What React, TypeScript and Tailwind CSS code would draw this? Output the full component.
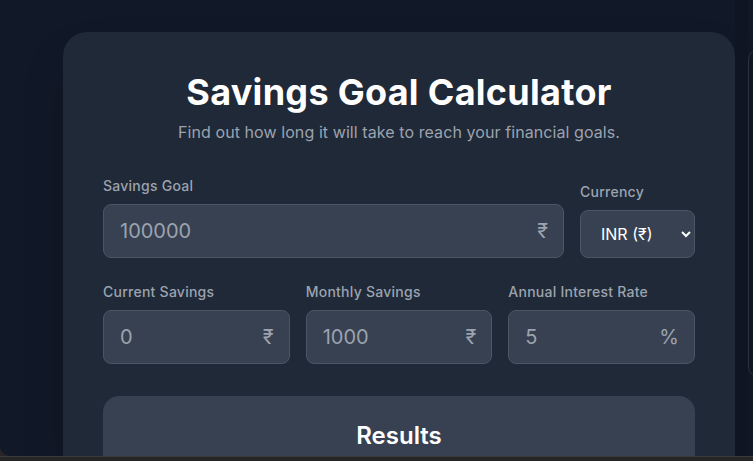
import { useState } from 'react';

// Savings goal calculator — form header section only.

type Field = {
  key: string;
  label: string;
  placeholder: string;
  suffix: string;
};

const rowFields: Field[] = [
  { key: 'current', label: 'Current Savings', placeholder: '0', suffix: '₹' },
  { key: 'monthly', label: 'Monthly Savings', placeholder: '1000', suffix: '₹' },
  { key: 'rate', label: 'Annual Interest Rate', placeholder: '5', suffix: '%' },
];

function SuffixInput({ placeholder, suffix }: { placeholder: string; suffix: string }) {
  return (
    <div className="relative">
      <input
        type="text"
        placeholder={placeholder}
        className="h-[54px] w-full rounded-lg border border-[#4b5563] bg-[#374151] px-4 text-xl text-white placeholder-[#9ca3af] outline-none"
      />
      <span className="pointer-events-none absolute right-4 top-1/2 -translate-y-1/2 text-xl text-[#9ca3af]">
        {suffix}
      </span>
    </div>
  );
}

function FieldLabel({ children }: { children: string }) {
  return (
    <label className="mb-2 block text-sm font-medium tracking-[0.018em] text-[#9ca3af]">
      {children}
    </label>
  );
}

export default function App() {
  const [currency, setCurrency] = useState('INR');

  return (
    <div className="h-[461px] w-full overflow-hidden bg-[#262626] font-['Inter','Noto_Sans',sans-serif]">
      <div className="flex h-[456px] overflow-hidden rounded-bl-[10px] bg-[#111827]">
        <div className="w-[63px] shrink-0" />
        <div className="mt-8 w-[672px] shrink-0 rounded-t-3xl bg-[#1f2937] p-10 shadow-2xl">
          <h1 className="text-center text-4xl font-bold tracking-[0.008em] text-white">
            Savings Goal Calculator
          </h1>
          <p className="mt-2 text-center text-base tracking-[0.005em] text-[#9ca3af]">
            Find out how long it will take to reach your financial goals.
          </p>

          <div className="mt-8 flex items-end gap-4">
            <div className="flex-1">
              <FieldLabel>Savings Goal</FieldLabel>
              <SuffixInput placeholder="100000" suffix="₹" />
            </div>
            <div className="w-[115px]">
              <FieldLabel>Currency</FieldLabel>
              <select
                value={currency}
                onChange={(e) => setCurrency(e.target.value)}
                className="h-[48px] w-full rounded-lg border border-[#4b5563] bg-[#374151] px-4 text-base text-white outline-none"
              >
                <option value="INR">INR (₹)</option>
                <option value="USD">USD ($)</option>
                <option value="EUR">EUR (€)</option>
              </select>
            </div>
          </div>

          <div className="mt-6 grid grid-cols-3 gap-4">
            {rowFields.map((f) => (
              <div key={f.key}>
                <FieldLabel>{f.label}</FieldLabel>
                <SuffixInput placeholder={f.placeholder} suffix={f.suffix} />
              </div>
            ))}
          </div>

          <div className="mt-8 rounded-2xl bg-[#374151] p-6">
            <h2 className="text-center text-2xl font-semibold text-white">Results</h2>
          </div>
        </div>
        <div className="w-[13px] shrink-0 bg-[#0f1523]" />
        <div className="mt-[48px] h-[330px] w-[20px] shrink-0 rounded-l-xl border border-[#2a3140] bg-[#0f1523]" />
      </div>
      <div className="h-px bg-[#3a3a3a]" />
    </div>
  );
}
